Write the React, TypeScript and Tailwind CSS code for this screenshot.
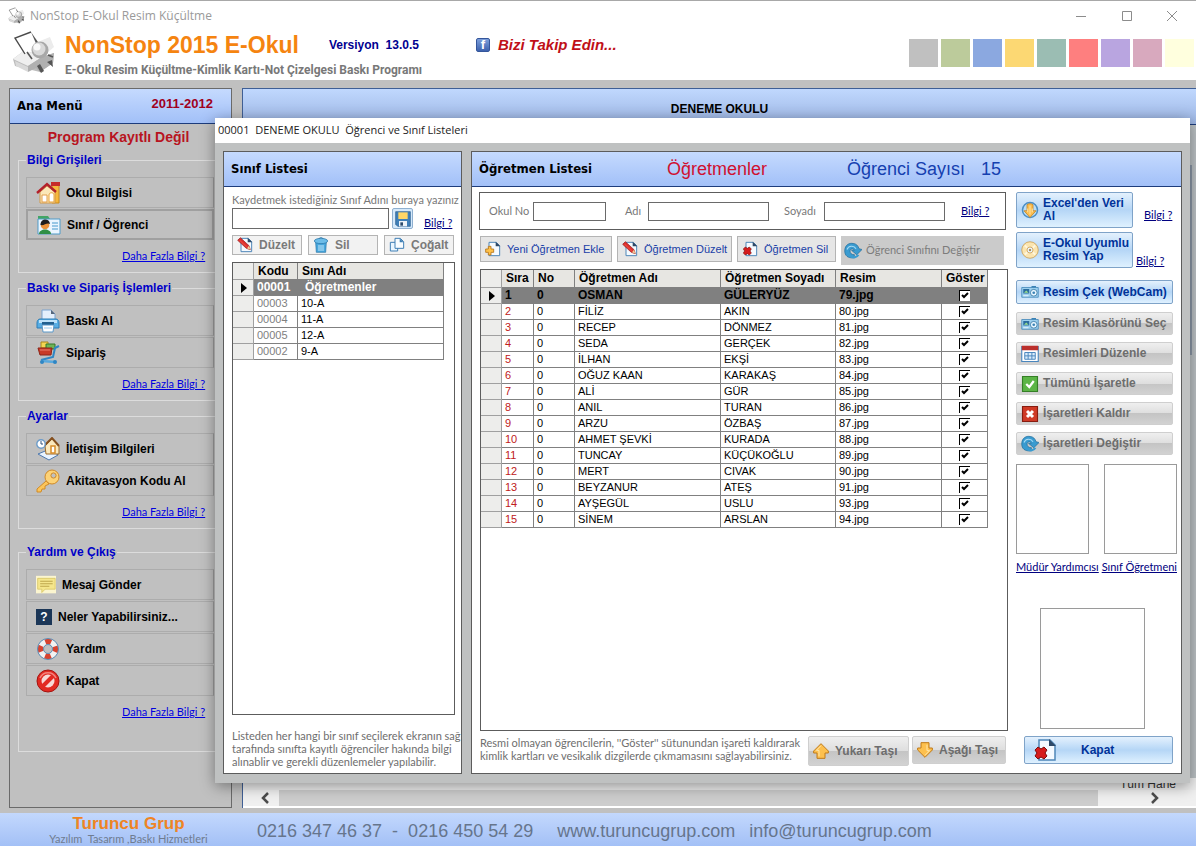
import type { ReactNode } from "react";
import clsx from "clsx";

type Student = { first: string; last: string; image: string };

const CLASSES = [
  { code: "00001", name: "Öğretmenler" },
  { code: "00003", name: "10-A" },
  { code: "00004", name: "11-A" },
  { code: "00005", name: "12-A" },
  { code: "00002", name: "9-A" },
];

const TEACHERS: Student[] = [
  { first: "OSMAN", last: "GÜLERYÜZ", image: "79.jpg" },
  { first: "FİLİZ", last: "AKIN", image: "80.jpg" },
  { first: "RECEP", last: "DÖNMEZ", image: "81.jpg" },
  { first: "SEDA", last: "GERÇEK", image: "82.jpg" },
  { first: "İLHAN", last: "EKŞİ", image: "83.jpg" },
  { first: "OĞUZ KAAN", last: "KARAKAŞ", image: "84.jpg" },
  { first: "ALİ", last: "GÜR", image: "85.jpg" },
  { first: "ANIL", last: "TURAN", image: "86.jpg" },
  { first: "ARZU", last: "ÖZBAŞ", image: "87.jpg" },
  { first: "AHMET ŞEVKİ", last: "KURADA", image: "88.jpg" },
  { first: "TUNCAY", last: "KÜÇÜKOĞLU", image: "89.jpg" },
  { first: "MERT", last: "CIVAK", image: "90.jpg" },
  { first: "BEYZANUR", last: "ATEŞ", image: "91.jpg" },
  { first: "AYŞEGÜL", last: "USLU", image: "93.jpg" },
  { first: "SİNEM", last: "ARSLAN", image: "94.jpg" },
];

const SWATCHES = [
  "bg-[#c0c0c0]",
  "bg-[#bccb9b]",
  "bg-[#8ba8e0]",
  "bg-[#fcd873]",
  "bg-[#9bbdb3]",
  "bg-[#fe7f7f]",
  "bg-[#b9a5e0]",
  "bg-[#d8a9be]",
  "bg-[#ffffde]",
];

/* ---------- icons ---------- */

function Svg({ size, box = 24, children }: { size: string; box?: number; children: ReactNode }) {
  return (
    <svg aria-hidden viewBox={`0 0 ${box} ${box}`} className={clsx("shrink-0", size)} fill="none">
      {children}
    </svg>
  );
}

function LogoIcon({ size }: { size: string }) {
  return (
    <Svg size={size} box={44}>
      <path d="M1 29 13 20l17 7 12-4-1 10-13 9L3 36z" fill="#bdbdbd" />
      <path d="M1 29l12-9 17 7-14 9z" fill="#efefef" />
      <path d="M3 31l13 6v5L4 36z" fill="#d9d9d9" />
      <path d="M16 36l14-9 12-4-1 10-13 9-4-4-8 4z" fill="#b0b0b0" />
      <path d="M25 36l4 7 3-2-4-7zM35 32l6 5-1-7z" fill="#555" />
      <path d="M3 8 19 2l7 15-13 7z" fill="#fff" />
      <path d="M13 24 3 8 19 2" stroke="#4a4a4a" strokeWidth="1.4" />
      <path d="M19 2l9 13-2 3z" fill="#555" />
      <path d="M28 11l10-4 4 10-7 6z" fill="#ececec" />
      <circle cx="28" cy="20" r="8.5" fill="#a8a8a8" />
      <circle cx="27" cy="19" r="6.5" fill="#d9d9d9" />
      <circle cx="25" cy="17" r="3.5" fill="#fafafa" />
      <path d="M15 22l5 7M36 25l5 2" stroke="#555" strokeWidth="1.6" />
    </Svg>
  );
}

function HouseIcon() {
  return (
    <Svg size="size-6">
      <path d="M16 4h7v18h-7z" fill="#f6b73c" stroke="#c98a1c" />
      <path d="M15 1h9v4h-9z" fill="#c62a2a" />
      <path d="M4 11 11 5l8 6v11H4z" fill="#fbe7b8" stroke="#d29a4a" />
      <path d="M1 12 11 3l9 8" stroke="#b3202a" strokeWidth="2.4" />
      <path d="M6 14h5v7H6z" fill="#fff" stroke="#e39f4c" />
      <path d="M13 21v-7c0-3 5-3 5 0v7z" fill="#fff" stroke="#e8a33a" />
    </Svg>
  );
}

function StudentIcon() {
  return (
    <Svg size="size-6">
      <path d="M1 3h10l2 3v5H1z" fill="#43a565" />
      <path d="M1 6h22v15H1z" fill="#eaf5ff" stroke="#4f9bc9" />
      <path d="M2 21c0-6 12-6 12 0z" fill="#2f8f46" />
      <circle cx="8" cy="12" r="4.3" fill="#e9923a" />
      <path d="M3.500 12c0-7 9-7 9.500-1-3-2-6 2-9.500 1z" fill="#1d1d1d" />
      <path d="M15 10h6M15 13h6M15 16h6" stroke="#7db8de" strokeWidth="1.5" />
    </Svg>
  );
}

function PrinterIcon() {
  return (
    <Svg size="size-6">
      <path d="M6 1h9l4 4v9H6z" fill="#e4effc" stroke="#7aa3cf" />
      <path d="M15 1l4 4h-4z" fill="#56677c" />
      <path d="M4 10h16c2 0 3 2 3 4v5H1v-5c0-2 1-4 3-4z" fill="#58aee4" stroke="#2c7db7" />
      <path d="M3 11h18v3H3z" fill="#bfe3fa" />
      <path d="M6 13h12v3H6z" fill="#23608f" />
      <path d="M6 16h12l-1 7H7z" fill="#fff" stroke="#5b98c9" />
      <path d="M8 19h8" stroke="#9ccbee" />
    </Svg>
  );
}

function CartIcon() {
  return (
    <Svg size="size-6">
      <path d="M5 1h7v6H5z" fill="#f4d552" stroke="#a9861b" />
      <path d="M10 3h9v5h-9z" fill="#6fb457" stroke="#35782b" />
      <path d="M2 7h14l-1 7H4z" fill="#c93a26" stroke="#8d2519" />
      <path d="M4 9h10" stroke="#e97f6c" />
      <path d="M23 5l-4 2-2 9-12 3" stroke="#2f86c4" strokeWidth="2" />
      <path d="M5 20l15 1" stroke="#57a8de" strokeWidth="2.500" />
      <circle cx="6" cy="21" r="2" fill="#2f86c4" />
      <circle cx="19" cy="21" r="2" fill="#2f86c4" />
    </Svg>
  );
}

function ContactIcon() {
  return (
    <Svg size="size-6">
      <path d="M2 17l12-5 8 6-9 5z" fill="#e8f3ff" stroke="#4c77ad" />
      <path d="M9 9l7-7 7 7v8H10z" fill="#fbe9bd" stroke="#9a6b2b" />
      <path d="M8 9l8-8 7 8" stroke="#85501f" strokeWidth="2" />
      <path d="M15 9h4v7h-4z" fill="#fff" stroke="#d88c28" strokeWidth="1.500" />
      <circle cx="5" cy="7" r="4.200" fill="#fff" stroke="#6d9cc9" strokeWidth="1.400" />
      <path d="M5 4v3h2" stroke="#31537c" />
    </Svg>
  );
}

function KeyIcon() {
  return (
    <Svg size="size-6">
      <path d="M10 12 1 20v3h4l1-3h3v-3l4-2z" fill="#fbc55a" stroke="#d08a27" />
      <circle cx="16" cy="8" r="7" fill="#fcd277" stroke="#d08a27" />
      <circle cx="17.500" cy="6.500" r="2.600" fill="#c0c0c0" stroke="#d08a27" />
    </Svg>
  );
}

function NoteIcon() {
  return (
    <Svg size="size-5">
      <path d="M0 1h24v21H0z" fill="#fbf5cf" />
      <path d="M2 4h21v13H11l-4 4v-4H2z" fill="#f5e68c" stroke="#d9c566" />
      <path d="M5 7.500h15M5 10.500h15M5 13.500h11" stroke="#bda64b" strokeWidth="1.400" />
    </Svg>
  );
}

function QuestionIcon() {
  return (
    <span aria-hidden className="flex size-4 shrink-0 items-center justify-center bg-[#1b3657] text-[12px] font-bold text-white">
      ?
    </span>
  );
}

function LifebuoyIcon() {
  return (
    <Svg size="size-6">
      <circle cx="12" cy="12" r="7.500" stroke="#f2f2f2" strokeWidth="5.500" />
      <circle cx="12" cy="12" r="7.500" stroke="#d8432f" strokeWidth="5.500" strokeDasharray="5.890 5.890" strokeDashoffset="2.945" />
      <circle cx="12" cy="12" r="10.500" stroke="#5d8fb8" />
      <circle cx="12" cy="12" r="4.500" stroke="#5d8fb8" />
    </Svg>
  );
}

function ForbiddenIcon() {
  return (
    <Svg size="size-6">
      <circle cx="12" cy="12" r="11" fill="#e22a23" stroke="#a41410" />
      <circle cx="12" cy="12" r="6.500" fill="#f7d9d7" />
      <path d="M7 17 17 7" stroke="#e22a23" strokeWidth="4" />
      <path d="M4 9c3-7 13-7 16 0" stroke="#f4847e" strokeWidth="1.500" />
    </Svg>
  );
}

function PagePath() {
  return (
    <>
      <path d="M6 2h11l5 5v15H6z" fill="#f5faff" stroke="#4f86b8" strokeWidth="1.500" />
      <path d="M16 1l7 7h-7z" fill="#2f4a68" />
    </>
  );
}

function EditPageIcon() {
  return (
    <Svg size="size-4">
      <PagePath />
      <path d="M1 5l4-4 13 12 2 6-6-2z" fill="#dd2b2b" stroke="#8f1616" />
      <path d="M4 5l11 10" stroke="#e8453b" strokeWidth="2" />
      <path d="M15 17l5 2-2-6z" fill="#f3d19a" />
    </Svg>
  );
}

function AddPageIcon() {
  return (
    <Svg size="size-4">
      <PagePath />
      <path d="M5 8h4v4h4v5H9v4H5v-4H1v-5h4z" fill="#ffc24a" stroke="#b8761a" strokeWidth="1.300" />
    </Svg>
  );
}

function DeletePageIcon({ size = "size-4" }: { size?: string }) {
  return (
    <Svg size={size}>
      <PagePath />
      <path d="M2 12l3-3 3 2 3-2 3 3-2 3 2 3-3 3-3-2-3 2-3-3 2-3z" fill="#d61c1c" stroke="#7d0c0c" />
    </Svg>
  );
}

function CopyIcon() {
  return (
    <Svg size="size-4">
      <path d="M2 8h11v13H2z" fill="#e9f5ff" stroke="#3f7fb5" strokeWidth="1.500" />
      <path d="M9 2h8l5 5v10H9z" fill="#f8fcff" stroke="#3f7fb5" strokeWidth="1.500" />
      <path d="M16 2l6 6h-6z" fill="#3f7fb5" />
    </Svg>
  );
}

function TrashIcon() {
  return (
    <Svg size="size-4">
      <path d="M4 8h16l-1 15H5z" fill="#48a7dd" stroke="#1f6fa5" />
      <ellipse cx="12" cy="6" rx="10" ry="4" fill="#6cbce8" stroke="#1f6fa5" />
      <path d="M9 3c0-3 6-3 6 0" stroke="#1f6fa5" />
      <path d="M9 12v9M12 12v9M15 12v9" stroke="#d5effc" strokeWidth="1.300" />
    </Svg>
  );
}

function DiskIcon() {
  return (
    <Svg size="size-4">
      <path d="M1 1h22v22H4l-3-3z" fill="#3f7fb8" stroke="#24578a" />
      <path d="M5 2h14v10H5z" fill="#ffd667" />
      <path d="M6 15h12v8H6z" fill="#eef3f8" />
      <path d="M8 17h4v5H8z" fill="#2b4a6b" />
    </Svg>
  );
}

function SwapIcon() {
  return (
    <Svg size="size-[18px]">
      <path d="M1 12C1 3 8 1 12 2c4 0 7 3 8 7l4 1-7 7-7-6h4c-2-3-6-2-6 1 0 3 2 5 6 5l-1 4C5 22 1 18 1 12z" fill="#3a9bd0" stroke="#226f9e" />
      <path d="M8 18c3 4 9 3 11-1" stroke="#3a9bd0" strokeWidth="3" />
      <path d="M4 10c2-5 9-6 12-1" stroke="#a8dcf5" strokeWidth="1.500" />
    </Svg>
  );
}

function ExcelIcon() {
  return (
    <Svg size="size-[18px]">
      <circle cx="12" cy="12" r="10" fill="#b9dcf5" stroke="#4b8ec4" strokeWidth="2" />
      <path d="M8 5c2-2 6-2 8 0v8h4l-8 9-8-9h4z" fill="#fbbd4d" stroke="#c07f1e" />
      <path d="M12 6v12M9 10v5M15 10v5" stroke="#fde0a0" strokeWidth="1.500" />
    </Svg>
  );
}

function DiscIcon() {
  return (
    <Svg size="size-[18px]">
      <circle cx="12" cy="12" r="11" fill="#fbe5b0" stroke="#c99a48" />
      <path d="M5 6l14 12M19 6 5 18" stroke="#fff6dd" strokeWidth="2.500" />
      <circle cx="12" cy="12" r="4" fill="#e9f3fb" stroke="#c99a48" />
      <circle cx="12" cy="12" r="1.500" fill="#a98243" />
    </Svg>
  );
}

function CameraIcon() {
  return (
    <Svg size="size-[18px]">
      <path d="M1 6h22v13H1z" fill="#9dd0ee" stroke="#3b82b5" />
      <path d="M14 4h6v2h-6z" fill="#3b82b5" />
      <path d="M3 8h8v6H3z" fill="#2b6d9e" />
      <path d="M4 13l3-3 3 3z" fill="#9be08c" />
      <circle cx="17" cy="13" r="4.500" fill="#e7f6ff" stroke="#2b6d9e" />
      <circle cx="17" cy="13" r="1.800" fill="#3b82b5" />
      <path d="M3 17h7" stroke="#fff" />
    </Svg>
  );
}

function CalendarIcon() {
  return (
    <Svg size="size-[18px]">
      <path d="M1 2h22v20H1z" fill="#fff" stroke="#4a86bd" strokeWidth="1.500" />
      <path d="M1 1h22v6H1z" fill="#bb2f2c" />
      <path d="M5 10h14v9H5zM5 14.500h14M9.500 10v9M14.500 10v9" fill="#d8ecfb" stroke="#4a86bd" strokeWidth="1.300" />
    </Svg>
  );
}

function CheckSquareIcon() {
  return (
    <Svg size="size-[18px]">
      <path d="M2 2h20v20H2z" fill="#5cb546" stroke="#357f26" strokeWidth="1.500" />
      <path d="M7 12l4 4 6-8" stroke="#fff" strokeWidth="3" />
    </Svg>
  );
}

function CrossSquareIcon() {
  return (
    <Svg size="size-[18px]">
      <path d="M2 2h20v20H2z" fill="#cf3a26" stroke="#871d10" strokeWidth="1.500" />
      <path d="M8 8l8 8M16 8l-8 8" stroke="#fff" strokeWidth="4" />
    </Svg>
  );
}

function ArrowIcon({ down }: { down?: boolean }) {
  return (
    <Svg size={clsx("size-4", down && "rotate-180")}>
      <path d="M12 1 1 12v3h5v8h12v-8h5v-3z" fill="#fdc04e" stroke="#c07a18" strokeWidth="1.500" />
      <path d="M12 4l-7 7h4v9" stroke="#ffe7ae" strokeWidth="1.500" />
    </Svg>
  );
}

function FacebookIcon() {
  return (
    <span aria-hidden className="flex size-[14px] items-end justify-center rounded-[2px] border border-[#34569b] bg-linear-to-b from-[#7d9fdb] to-[#3d62ae] text-[13px] leading-[12px] font-bold text-white">
      f
    </span>
  );
}

/* ---------- shared pieces ---------- */

const SMALL = "font-[Lato,'Liberation_Sans',sans-serif] text-[11px]";

function TextLink({ children, className }: { children: ReactNode; className?: string }) {
  return (
    <a href="#" className={clsx(SMALL, "leading-[14px] whitespace-nowrap underline", className ?? "text-[#000080]")}>
      {children}
    </a>
  );
}

function MenuGroup({ title, last, children }: { title: string; last?: boolean; children: ReactNode }) {
  return (
    <fieldset className={clsx("mr-[9px] ml-2 border border-[#dcdcdc] px-[7px]", last ? "mt-2 pb-8" : "mb-2 pb-[9px]")}>
      <legend className="px-px text-[12px] leading-[14px] font-bold text-[#0000c8]">{title}</legend>
      <div className="pt-[10px]">{children}</div>
      <div className="mt-[9px] flex pl-24">
        <TextLink className="text-[#0000e0]">Daha Fazla Bilgi ?</TextLink>
      </div>
    </fieldset>
  );
}

function MenuButton({ icon, active, children }: { icon: ReactNode; active?: boolean; children: ReactNode }) {
  return (
    <button
      type="button"
      className={clsx(
        "mb-px flex h-[31px] w-full items-center gap-[6px] border pl-[9px] text-[12px] font-bold text-black",
        active ? "border-2 border-[#a0a0a0] pl-2" : "border-[#acacac] border-r-[#9c9c9c]",
      )}
    >
      {icon}
      {children}
    </button>
  );
}

function SmallButton({ icon, children, className }: { icon: ReactNode; children: ReactNode; className?: string }) {
  return (
    <button
      type="button"
      className={clsx("flex items-center gap-[6px] border border-[#b4b4b4] px-1 whitespace-nowrap", className)}
    >
      {icon}
      {children}
    </button>
  );
}

function GlossyButton({
  icon,
  tone = "blue",
  className,
  children,
}: {
  icon: ReactNode;
  tone?: "blue" | "gray";
  className?: string;
  children: ReactNode;
}) {
  return (
    <button
      type="button"
      className={clsx(
        "flex items-center rounded-[2px] border text-left text-[12px] leading-[13px] font-bold",
        tone === "blue"
          ? "border-[#7fa3c8] bg-linear-to-b from-[#e4f1fd] from-0% via-[#b5d6f6] via-50% to-[#dff1ff] text-[#003399]"
          : "border-[#cfcfcf] bg-[linear-gradient(#efefef,#dedede_50%,#c4c4c4_50%,#d2d2d2)] text-[#6d6d6d]",
        className,
      )}
    >
      {icon}
      {children}
    </button>
  );
}

function PanelHeader({ children }: { children: ReactNode }) {
  return (
    <header className="flex h-[35px] shrink-0 items-center border-b border-[#1d3c7c] bg-linear-to-b from-[#c5dafe] to-[#a2c0f8] px-[7px]">
      {children}
    </header>
  );
}

const HEADING = "font-['DejaVu_Sans_Condensed','DejaVu_Sans',sans-serif] text-[13px] font-bold text-black";
const HEAD_CELL = "border-r border-b border-[#808080] pl-1 text-left font-bold";
const CELL = "border-r border-b border-[#808080] pl-[3px]";
const GUTTER = "border-r border-b border-[#a0a0a0] bg-[#ededeb]";

function Pointer() {
  return (
    <svg aria-hidden viewBox="0 0 6 10" className="ml-2 h-[10px] w-[6px]">
      <path d="M0 0l6 5-6 5z" fill="#000" />
    </svg>
  );
}

function ShowCheckbox({ label }: { label: string }) {
  return (
    <span className="mx-auto grid size-[11px]">
      <input
        type="checkbox"
        defaultChecked
        aria-label={label}
        className="peer col-start-1 row-start-1 size-[11px] appearance-none border-t border-l border-black bg-white"
      />
      <svg
        aria-hidden
        viewBox="0 0 11 11"
        className="pointer-events-none invisible col-start-1 row-start-1 size-[11px] peer-checked:visible"
      >
        <path d="M3 5l2 2 4-4" fill="none" stroke="#000" strokeWidth="2" />
      </svg>
    </span>
  );
}

/* ---------- main window ---------- */

function TopBar() {
  return (
    <header className="h-20 shrink-0 border-t border-[#a8a8a8] bg-white">
      <div className="flex h-[29px] items-center pl-2">
        <LogoIcon size="size-[17px]" />
        <span className="ml-[5px] flex-1 font-['Open_Sans',sans-serif] text-[12px] text-[#9a9a9a]">
          NonStop E-Okul Resim Küçültme
        </span>
        <div className="flex w-[140px] items-center justify-between pr-[18px] pl-[19px]">
          <button type="button" aria-label="Küçült">
            <svg viewBox="0 0 12 12" className="size-3" fill="none" stroke="#8c8c8c">
              <path d="M1 6.500h10" />
            </svg>
          </button>
          <button type="button" aria-label="Ekranı Kapla">
            <svg viewBox="0 0 12 12" className="size-3" fill="none" stroke="#8c8c8c">
              <path d="M1.500 1.500h9v9h-9z" />
            </svg>
          </button>
          <button type="button" aria-label="Kapat">
            <svg viewBox="0 0 12 12" className="size-3" fill="none" stroke="#8c8c8c">
              <path d="M1 1l10 10M11 1 1 11" />
            </svg>
          </button>
        </div>
      </div>
      <div className="flex">
        <div className="pl-3">
          <LogoIcon size="size-11" />
        </div>
        <div className="ml-[9px] w-[411px]">
          <div className="flex h-[30px] items-center">
            <h1 className="text-[23px] leading-[30px] font-bold whitespace-nowrap text-[#f58410]">NonStop 2015 E-Okul</h1>
            <span className="ml-[30px] text-[12px] font-bold whitespace-pre text-[#000090]">Versiyon  13.0.5</span>
          </div>
          <p className="font-[Roboto,sans-serif] text-[12px] leading-[20px] font-bold whitespace-nowrap text-[#787878]">
            E-Okul Resim Küçültme-Kimlik Kartı-Not Çizelgesi Baskı Programı
          </p>
        </div>
        <a href="#" className="flex h-[30px] items-center gap-2 text-[15px] font-bold whitespace-nowrap text-[#c01018] italic">
          <span className="not-italic">
            <FacebookIcon />
          </span>
          Bizi Takip Edin...
        </a>
        <div className="ml-auto flex gap-[3px] pt-[9px] pr-[2px]">
          {SWATCHES.map((color) => (
            <button key={color} type="button" aria-label="Tema" className={clsx("h-7 w-[29px]", color)} />
          ))}
        </div>
      </div>
    </header>
  );
}

function Sidebar() {
  return (
    <aside className="flex w-[223px] shrink-0 flex-col border border-[#6a6a6a]">
      <div className="mb-[5px] flex h-[35px] items-center justify-between border-b border-[#1d3c7c] bg-linear-to-b from-[#c5dafe] to-[#a2c0f8] pr-[18px] pl-[7px]">
        <h2 className={HEADING}>Ana Menü</h2>
        <span className="pb-1 text-[13px] font-bold text-[#a00020]">2011-2012</span>
      </div>
      <p className="mb-[7px] pr-1 text-center text-[14px] leading-[17px] font-bold text-[#b81420]">Program Kayıtlı Değil</p>

      <MenuGroup title="Bilgi Grişileri">
        <MenuButton icon={<HouseIcon />}>Okul Bilgisi</MenuButton>
        <MenuButton icon={<StudentIcon />} active>
          Sınıf / Öğrenci
        </MenuButton>
      </MenuGroup>
      <MenuGroup title="Baskı ve Sipariş İşlemleri">
        <MenuButton icon={<PrinterIcon />}>Baskı Al</MenuButton>
        <MenuButton icon={<CartIcon />}>Sipariş</MenuButton>
      </MenuGroup>
      <MenuGroup title="Ayarlar">
        <MenuButton icon={<ContactIcon />}>İletişim Bilgileri</MenuButton>
        <MenuButton icon={<KeyIcon />}>Akitavasyon Kodu Al</MenuButton>
      </MenuGroup>
      <MenuGroup title="Yardım ve Çıkış" last>
        <MenuButton icon={<NoteIcon />}>Mesaj Gönder</MenuButton>
        <MenuButton icon={<QuestionIcon />}>Neler Yapabilirsiniz...</MenuButton>
        <MenuButton icon={<LifebuoyIcon />}>Yardım</MenuButton>
        <MenuButton icon={<ForbiddenIcon />}>Kapat</MenuButton>
      </MenuGroup>
    </aside>
  );
}

function Workspace() {
  return (
    <main className="flex min-w-0 flex-1 flex-col border-t border-l border-[#3f5f95]">
      <div className="flex h-9 items-center justify-center border-b border-[#1d3c7c] bg-linear-to-b from-[#c0d8fe] to-[#9db6e4] pt-1">
        <h2 className="text-[12px] font-bold text-black">DENEME OKULU</h2>
      </div>
      <div className="flex flex-1 justify-end bg-[#bcc2c5] pt-10 pr-1">
        <div className="h-[190px] w-[2px] bg-[#8c98a8]" />
      </div>
      <div className="flex justify-end bg-[#ededed] pr-5">
        <span className="text-[12px] leading-[12px] text-[#333]">Tüm Hane</span>
      </div>
      <div className="flex h-4 items-stretch bg-[#f0f0f0]">
        <button type="button" aria-label="Sola kaydır" className="flex w-9 items-center justify-center pl-2">
          <svg viewBox="0 0 10 12" className="h-3 w-[10px]" fill="none" stroke="#4c4c4c" strokeWidth="2.500">
            <path d="M8 1 3 6l5 5" />
          </svg>
        </button>
        <div className="flex-1 bg-[#cdcdcd]" />
        <button type="button" aria-label="Sağa kaydır" className="flex w-[98px] items-center justify-center pl-4">
          <svg viewBox="0 0 10 12" className="h-3 w-[10px]" fill="none" stroke="#4c4c4c" strokeWidth="2.500">
            <path d="M2 1l5 5-5 5" />
          </svg>
        </button>
      </div>
      <div className="h-[2px] bg-white" />
    </main>
  );
}

/* ---------- dialog ---------- */

function ClassPanel() {
  return (
    <section className="flex w-[239px] shrink-0 flex-col border border-[#5c5c5c] bg-white">
      <PanelHeader>
        <h2 className={HEADING}>Sınıf Listesi</h2>
      </PanelHeader>
      <div className="flex flex-1 flex-col pr-[6px] pb-[5px] pl-2">
        <label htmlFor="class-name" className={clsx(SMALL, "mt-[5px] leading-[15px] whitespace-nowrap text-[#787878]")}>
          Kaydetmek istediğiniz Sınıf Adını buraya yazınız
        </label>
        <div className="mt-px flex items-end">
          <input id="class-name" className="h-[21px] w-[157px] border border-[#6a6a6a] bg-white px-1 text-[11px]" />
          <button
            type="button"
            aria-label="Kaydet"
            className="ml-[3px] flex size-[21px] items-center justify-center rounded-[2px] border border-[#8fb0d0] bg-[#d5e9fb]"
          >
            <DiskIcon />
          </button>
          <span className="-mb-px ml-[11px] flex">
            <TextLink>Bilgi ?</TextLink>
          </span>
        </div>
        <div className="mt-[6px] flex w-[222px] gap-[6px] text-[12px] font-bold text-[#7a7a7a]">
          <SmallButton icon={<EditPageIcon />} className="h-5 flex-1 bg-[#f2f2f2]">
            Düzelt
          </SmallButton>
          <SmallButton icon={<TrashIcon />} className="h-5 flex-1 bg-[#f2f2f2]">
            Sil
          </SmallButton>
          <SmallButton icon={<CopyIcon />} className="h-5 flex-1 bg-[#f2f2f2]">
            Çoğalt
          </SmallButton>
        </div>
        <div className="mt-[7px] w-[223px] flex-1 border border-[#5c5c5c]">
          <table className="table-fixed border-separate border-spacing-0 text-[11px] leading-[15px]">
            <thead>
              <tr className="bg-[#e7e6e2] text-[12px] leading-4">
                <th className={clsx(GUTTER, "w-[21px]")} />
                <th className={clsx(HEAD_CELL, "w-11")}>Kodu</th>
                <th className={clsx(HEAD_CELL, "w-[146px]")}>Sını Adı</th>
              </tr>
            </thead>
            <tbody>
              {CLASSES.map((row, i) => (
                <tr key={row.code} className={clsx(i === 0 && "bg-[#808080] text-[12px] font-bold text-white")}>
                  <td className={GUTTER}>{i === 0 && <Pointer />}</td>
                  <td className={clsx(CELL, i > 0 && "text-[#808080]")}>{row.code}</td>
                  <td className={clsx(CELL, i === 0 && "pl-[7px]")}>{row.name}</td>
                </tr>
              ))}
            </tbody>
          </table>
        </div>
        <p className={clsx(SMALL, "mt-[14px] leading-[13px] whitespace-nowrap text-[#6e6e6e]")}>
          Listeden her hangi bir sınıf seçilerek ekranın sağ
          <br />
          tarafında sınıfta kayıtlı öğrenciler hakında bilgi
          <br />
          alınablir ve gerekli düzenlemeler yapılabilir.
        </p>
      </div>
    </section>
  );
}

function SearchBar() {
  const input = "h-[19px] border border-[#6a6a6a] bg-white px-1";
  return (
    <form className={clsx(SMALL, "mr-[2px] flex h-[38px] items-center border border-[#5c5c5c] pl-[9px] text-[#787878]")}>
      <label htmlFor="school-no" className="w-11">
        Okul No
      </label>
      <input id="school-no" className={clsx(input, "w-[73px]")} />
      <label htmlFor="first-name" className="w-[42px] pl-[19px]">
        Adı
      </label>
      <input id="first-name" className={clsx(input, "w-[121px]")} />
      <label htmlFor="last-name" className="w-[55px] pl-[15px]">
        Soyadı
      </label>
      <input id="last-name" className={clsx(input, "mr-4 w-[121px]")} />
      <TextLink>Bilgi ?</TextLink>
    </form>
  );
}

function TeacherTable() {
  return (
    <table className="table-fixed border-separate border-spacing-0 text-[11px] leading-[15px]">
      <thead>
        <tr className="bg-[#e7e6e2] text-[12px] leading-[17px]">
          <th className={clsx(GUTTER, "w-[21px]")} />
          <th className={clsx(HEAD_CELL, "w-8")}>Sıra</th>
          <th className={clsx(HEAD_CELL, "w-[41px]")}>No</th>
          <th className={clsx(HEAD_CELL, "w-[146px]")}>Öğretmen Adı</th>
          <th className={clsx(HEAD_CELL, "w-[115px]")}>Öğretmen Soyadı</th>
          <th className={clsx(HEAD_CELL, "w-[106px]")}>Resim</th>
          <th className={clsx(HEAD_CELL, "w-[46px]")}>Göster</th>
        </tr>
      </thead>
      <tbody>
        {TEACHERS.map((row, i) => (
          <tr key={row.image} className={clsx(i === 0 && "bg-[#808080] text-[12px] font-bold")}>
            <td className={GUTTER}>{i === 0 && <Pointer />}</td>
            <td className={clsx(CELL, i > 0 && "text-[#c02020]")}>{i + 1}</td>
            <td className={CELL}>0</td>
            <td className={CELL}>{row.first}</td>
            <td className={CELL}>{row.last}</td>
            <td className={CELL}>{row.image}</td>
            <td className="border-r border-b border-[#808080]">
              <ShowCheckbox label={`Göster ${row.first} ${row.last}`} />
            </td>
          </tr>
        ))}
      </tbody>
    </table>
  );
}

function ActionColumn() {
  return (
    <div className="flex w-[161px] shrink-0 flex-col">
      <div className="flex items-center gap-[11px]">
        <GlossyButton icon={<ExcelIcon />} className="h-9 w-[117px] gap-1 px-1">
          <span>
            Excel'den Veri
            <br />
            Al
          </span>
        </GlossyButton>
        <span className="pt-2">
          <TextLink>Bilgi ?</TextLink>
        </span>
      </div>
      <div className="mt-1 flex items-end gap-[3px]">
        <GlossyButton icon={<DiscIcon />} className="h-9 w-[117px] gap-1 px-1">
          <span className="whitespace-nowrap">
            E-Okul Uyumlu
            <br />
            Resim Yap
          </span>
        </GlossyButton>
        <TextLink>Bilgi ?</TextLink>
      </div>
      <div className="mt-3 mr-1 flex flex-col whitespace-nowrap">
        <GlossyButton icon={<CameraIcon />} className="mb-2 h-6 gap-1 px-1">
          Resim Çek (WebCam)
        </GlossyButton>
        <div className="flex flex-col gap-[7px]">
          <GlossyButton tone="gray" icon={<CameraIcon />} className="h-[23px] gap-1 px-1">
            Resim Klasörünü Seç
          </GlossyButton>
          <GlossyButton tone="gray" icon={<CalendarIcon />} className="h-[23px] gap-1 px-1">
            Resimleri Düzenle
          </GlossyButton>
          <GlossyButton tone="gray" icon={<CheckSquareIcon />} className="h-[23px] gap-1 px-1">
            Tümünü İşaretle
          </GlossyButton>
          <GlossyButton tone="gray" icon={<CrossSquareIcon />} className="h-[23px] gap-1 px-1">
            İşaretleri Kaldır
          </GlossyButton>
          <GlossyButton tone="gray" icon={<SwapIcon />} className="h-[23px] gap-1 px-1">
            İşaretleri Değiştir
          </GlossyButton>
        </div>
      </div>
      <div className="mt-[9px] flex justify-between">
        <div className="h-[90px] w-[73px] border border-[#9a9a9a]" />
        <div className="h-[90px] w-[73px] border border-[#9a9a9a]" />
      </div>
      <div className="mt-[6px] flex justify-between">
        <TextLink>Müdür Yardımcısı</TextLink>
        <TextLink>Sınıf Öğretmeni</TextLink>
      </div>
      <div className="mt-[34px] ml-6 h-[121px] w-[105px] border border-[#9a9a9a]" />
      <div className="mt-auto mr-1 mb-[9px] ml-2 flex flex-col">
        <GlossyButton icon={<DeletePageIcon size="size-6" />} className="h-7 gap-6 px-2">
          Kapat
        </GlossyButton>
      </div>
    </div>
  );
}

function TeacherPanel() {
  return (
    <section className="flex min-w-0 flex-1 flex-col border border-[#5c5c5c] bg-white">
      <PanelHeader>
        <h2 className={clsx(HEADING, "w-[188px]")}>Öğretmen Listesi</h2>
        <span className="w-[180px] text-[18px] text-[#d01030]">Öğretmenler</span>
        <span className="text-[18px] text-[#1540b0]">Öğrenci Sayısı</span>
        <span className="ml-4 text-[18px] text-[#1540b0]">15</span>
      </PanelHeader>
      <div className="flex flex-1 gap-2 pt-[5px] pr-1 pl-[7px]">
        <div className="flex min-w-0 flex-1 flex-col">
          <SearchBar />
          <div className="mt-[6px] ml-px flex items-start gap-[5px] text-[11px] text-[#1a3fa8]">
            <SmallButton icon={<AddPageIcon />} className="h-[26px] w-[132px] bg-[#e6e6e6]">
              Yeni Öğretmen Ekle
            </SmallButton>
            <SmallButton icon={<EditPageIcon />} className="h-[26px] w-[115px] bg-[#e6e6e6]">
              Öğretmen Düzelt
            </SmallButton>
            <SmallButton icon={<DeletePageIcon />} className="h-[26px] w-[99px] bg-[#e6e6e6]">
              Öğretmen Sil
            </SmallButton>
            <button
              type="button"
              disabled
              className={clsx(SMALL, "flex h-[29px] w-[163px] items-center gap-1 bg-[#cbcbcb] px-[3px] text-[#7c7c7c]")}
            >
              <SwapIcon />
              Öğrenci Sınıfını Değiştir
            </button>
          </div>
          <div className="mt-1 ml-px flex-1 border border-[#5c5c5c]">
            <TeacherTable />
          </div>
          <div className="mt-[5px] mb-[7px] ml-px flex items-start">
            <p className={clsx(SMALL, "flex-1 leading-[13px] whitespace-nowrap text-[#6e6e6e]")}>
              Resmi olmayan öğrencilerin, ''Göster'' sütunundan işareti kaldırarak
              <br />
              kimlik kartları ve vesikalık dizgilerde çıkmamasını sağlayabilirsiniz.
            </p>
            <div className="mr-[2px] flex gap-[3px] whitespace-nowrap">
              <GlossyButton tone="gray" icon={<ArrowIcon />} className="h-[30px] w-[101px] gap-[6px] px-1">
                Yukarı Taşı
              </GlossyButton>
              <GlossyButton tone="gray" icon={<ArrowIcon down />} className="h-7 w-[94px] gap-[6px] px-1">
                Aşağı Taşı
              </GlossyButton>
            </div>
          </div>
        </div>
        <ActionColumn />
      </div>
    </section>
  );
}

function ListsDialog() {
  return (
    <div
      role="dialog"
      aria-labelledby="dialog-title"
      className="absolute top-[118px] right-[6px] bottom-[63px] left-[215px] flex flex-col bg-[#bfc1c1] shadow-[0_3px_14px_rgba(0,0,0,0.4)]"
    >
      <div className="flex h-[25px] shrink-0 items-center bg-white pl-[3px]">
        <h2 id="dialog-title" className="font-['Open_Sans',sans-serif] text-[11px] whitespace-pre text-[#222]">
          00001  DENEME OKULU  Öğrenci ve Sınıf Listeleri
        </h2>
      </div>
      <div className="flex flex-1 gap-[9px] pt-2 pr-2 pb-[9px] pl-2">
        <ClassPanel />
        <TeacherPanel />
      </div>
    </div>
  );
}

export default function App() {
  return (
    <div className="relative flex min-h-screen flex-col bg-[#c0c0c0] font-['Liberation_Sans',Arial,sans-serif]">
      <TopBar />
      <div className="flex flex-1 gap-[10px] pt-2 pb-[5px] pl-[9px]">
        <Sidebar />
        <Workspace />
      </div>
      <footer className="flex h-[33px] shrink-0 items-center bg-linear-to-b from-[#c3d8fd] to-[#a3c0f6]">
        <div className="w-[257px] text-center">
          <p className="text-[17px] leading-[18px] font-bold text-[#ee8424]">Turuncu Grup</p>
          <p className={clsx(SMALL, "leading-[12px] whitespace-pre text-[#6f7c90]")}>Yazılım  Tasarım ,Baskı Hizmetleri</p>
        </div>
        <div className="flex pt-[3px] text-[18px] whitespace-pre text-[#66758c]">
          <span>0216 347 46 37  -  0216 450 54 29</span>
          <span className="ml-6">www.turuncugrup.com</span>
          <span className="ml-[14px]">info@turuncugrup.com</span>
        </div>
      </footer>
      <ListsDialog />
    </div>
  );
}
